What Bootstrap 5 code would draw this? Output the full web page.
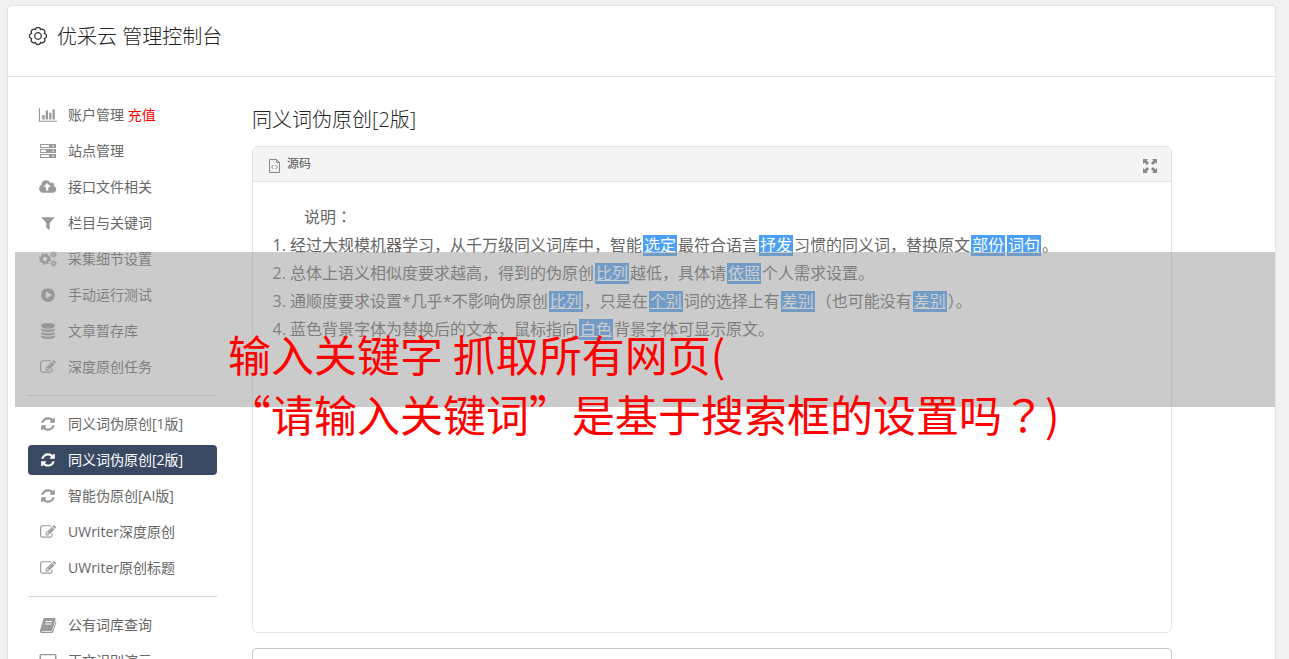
<!DOCTYPE html>
<html lang="zh-CN">
<head>
<meta charset="utf-8">
<meta name="viewport" content="width=device-width, initial-scale=1">
<title>优采云 管理控制台</title>
<link rel="stylesheet" href="https://cdn.jsdelivr.net/npm/bootstrap@5.3.0/dist/css/bootstrap.min.css">
<style>
  body { background: #f1f1f1; color: #333; height: 100vh; font-family: "Open Sans", "Noto Sans CJK SC", sans-serif; }
  .console { margin: 5px 13px 0 7px; background: #fff; border: 1px solid #e4e4e4; border-radius: 4px; min-height: 100vh; }
  .console-head { height: 71px; padding: 0 20px 8px; gap: 9px; border-bottom: 1px solid #e4e4e4; }
  h1, h2 { font-size: 20px; font-weight: 300; line-height: 30px; }
  h1, h2 { color: #222; }
  .console-body { padding: 23px 20px; gap: 35px; }
  .side { flex: 0 0 189px; }
  .side .nav { gap: 6px; }
  .side .nav-link { height: 30px; padding: 0 10px 2px; gap: 10px; font-size: 14px; color: #666; border-radius: 4px; white-space: nowrap; }
  .side .nav-link svg { width: 20px; height: 16px; margin-top: 2px; fill: #999; flex: none; }
  .side .nav-link.active { background: #394963; color: #fff; }
  .side .nav-link.active svg { fill: #fff; }
  .side hr { margin: 13px 0; border-color: #d4d4d4; opacity: 1; }
  .recharge { color: #f00; }
  .work { max-width: 920px; min-width: 0; }
  .work h2 { margin: 5px 0 11px; }
  .source { border-color: #e4e4e4; min-height: 487px; }
  .source .card-header { height: 35px; padding: 0 13px 0 14px; background: #f4f4f4; border-color: #e4e4e4; font-size: 12px; color: #555; }
  .source .card-body { padding: 20px 19px; font-size: 16px; line-height: 28px; color: #666; }
  .source p { text-indent: 32px; }
  .source ol { padding-left: 18px; }
  .swap { background: #4a9ff7; color: #fff; padding: 0 1px; margin: 0 1px; display: inline-block; line-height: 21px; height: 21px; }
  .swap:hover { background: #fff; color: #333; }
  .tool { width: 16px; height: 16px; }
  .midpoint { font-family: "Noto Sans CJK TC", sans-serif; }
  .result { margin-top: 15px; border-color: #c8c8c8; border-radius: 4px; }
  .caption-band { top: 252px; left: 15px; right: 14px; height: 155px; padding: 71px 0 0 213px; background: rgba(151,151,151,.5); color: #f00; font: 400 43px/60px "Noto Sans CJK SC", sans-serif; white-space: nowrap; pointer-events: none; }
</style>
<script src="https://cdn.jsdelivr.net/npm/bootstrap@5.3.0/dist/js/bootstrap.bundle.min.js"></script>
</head>
<body class="position-relative overflow-hidden">
<svg class="d-none">
  <symbol id="i-refresh" viewBox="0 0 1792 1792"><path d="M1639 1056q0 5-1 7-64 268-268 434.500t-478 166.500q-146 0-282.500-55t-243.500-157l-129 129q-19 19-45 19t-45-19-19-45v-448q0-26 19-45t45-19h448q26 0 45 19t19 45-19 45l-137 137q71 66 161 102t187 36q134 0 250-65t186-179q11-17 53-117 8-23 30-23h192q13 0 22.500 9.500t9.500 22.500zm25-800v448q0 26-19 45t-45 19h-448q-26 0-45-19t-19-45 19-45l138-138q-148-137-349-137-134 0-250 65t-186 179q-11 17-53 117-8 23-30 23h-199q-13 0-22.500-9.500t-9.500-22.500v-7q65-268 270-434.500t480-166.500q146 0 284 55.500t245 156.500l130-129q19-19 45-19t45 19 19 45z"/></symbol>
  <symbol id="i-edit" viewBox="0 0 1792 1792"><path d="M888 1184l116-116-152-152-116 116v56h96v96h56zm440-720q-16-16-33 1l-350 350q-17 17-1 33t33-1l350-350q17-17 1-33zm80 594v190q0 119-84.500 203.500t-203.500 84.500h-832q-119 0-203.500-84.500t-84.500-203.500v-832q0-119 84.500-203.500t203.500-84.500h832q63 0 117 25 15 7 18 23 3 17-9 29l-49 49q-14 14-32 8-23-6-45-6h-832q-66 0-113 47t-47 113v832q0 66 47 113t113 47h832q66 0 113-47t47-113v-126q0-13 9-22l64-64q15-15 35-7t20 29zm-96-738l288 288-672 672h-288v-288zm444 132l-92 92-288-288 92-92q28-28 68-28t68 28l152 152q28 28 28 68t-28 68z"/></symbol>
</svg>

<div class="console">
  <header class="console-head d-flex align-items-center">
    <svg width="20" height="20" viewBox="-10 -9 20 20" fill="none" stroke="#333" stroke-width="1.300" aria-hidden="true"><path d="M6.500 2.700A2.800 2.800 0 0 1 2.700 6.500A2.800 2.800 0 0 1-2.700 6.500A2.800 2.800 0 0 1-6.500 2.700A2.800 2.800 0 0 1-6.500-2.700A2.800 2.800 0 0 1-2.700-6.500A2.800 2.800 0 0 1 2.700-6.500A2.800 2.800 0 0 1 6.500-2.700A2.800 2.800 0 0 1 6.500 2.700Z"/><circle r="3.300"/></svg>
    <h1 class="m-0">优采云 管理控制台</h1>
  </header>

  <div class="console-body d-flex align-items-start">
    <aside class="side">
      <nav class="nav flex-column">
        <a class="nav-link d-flex align-items-center" href="#"><svg viewBox="0 0 2048 1792"><path d="M640 896v512h-256v-512h256zm384-512v1024h-256v-1024h256zm1024 1152v128h-2048v-1536h128v1408h1920zm-640-896v768h-256v-768h256zm384-384v1152h-256v-1152h256z"/></svg><span>账户管理 <span class="recharge">充值</span></span></a>
        <a class="nav-link d-flex align-items-center" href="#"><svg viewBox="0 0 20 16"><path fill-rule="evenodd" d="M2 1h16v4H2zM3 2v2h8V2zm11 .500v1h2v-1zM2 6h16v4H2zM3 7v2h5V7zm11 .500v1h2v-1zM2 11h16v4H2zM3 12v2h8v-2zm11 .500v1h2v-1z"/></svg>站点管理</a>
        <a class="nav-link d-flex align-items-center" href="#"><svg viewBox="-32 0 1920 1792"><path d="M1216 864q0-14-9-23l-352-352q-9-9-23-9t-23 9l-351 351q-10 12-10 24 0 14 9 23t23 9h224v352q0 13 9.500 22.500t22.500 9.500h192q13 0 22.500-9.500t9.500-22.500v-352h224q13 0 22.500-9.500t9.500-22.500zm640 288q0 159-112.500 271.500t-271.500 112.500h-1088q-185 0-316.500-131.500t-131.500-316.500q0-130 70-240t188-165q-2-30-2-43 0-212 150-362t362-150q156 0 285.500 87t188.500 231q71-62 166-62 106 0 181 75t75 181q0 76-41 138 130 31 213.500 135.500t83.500 238.500z"/></svg>接口文件相关</a>
        <a class="nav-link d-flex align-items-center" href="#"><svg viewBox="0 0 1792 1792"><path d="M1595 295q17 41-14 70l-493 493v742q0 42-39 59-13 5-25 5-27 0-45-19l-256-256q-19-19-19-45v-486l-493-493q-31-29-14-70 17-39 59-39h1280q42 0 59 39z"/></svg>栏目与关键词</a>
        <a class="nav-link d-flex align-items-center" href="#"><svg viewBox="0 0 20 16"><g fill="none" stroke="#999"><circle cx="7" cy="8" r="3.500" stroke-width="2.400"/><circle cx="7" cy="8" r="5.100" stroke-width="1.600" stroke-dasharray="2 2"/><circle cx="15.500" cy="3.500" r="1.700" stroke-width="1.300"/><circle cx="15.500" cy="3.500" r="2.700" stroke-width="1" stroke-dasharray="1.060 1.060"/><circle cx="15.500" cy="12.500" r="1.700" stroke-width="1.300"/><circle cx="15.500" cy="12.500" r="2.700" stroke-width="1" stroke-dasharray="1.060 1.060"/></g></svg>采集细节设置</a>
        <a class="nav-link d-flex align-items-center" href="#"><svg viewBox="0 0 1792 1792"><path d="M896 128q209 0 385.500 103t279.500 279.500 103 385.500-103 385.500-279.500 279.500-385.500 103-385.500-103-279.500-279.500-103-385.500 103-385.500 279.500-279.500 385.500-103zm384 823q32-18 32-55t-32-55l-544-320q-31-19-64-1-32 19-32 56v640q0 37 32 56 16 8 32 8 17 0 32-9z"/></svg>手动运行测试</a>
        <a class="nav-link d-flex align-items-center" href="#"><svg viewBox="0 0 1792 1792"><path d="M896 768q237 0 443-43t325-127v170q0 69-103 128t-280 93.500-385 34.500-385-34.500-280-93.500-103-128v-170q119 84 325 127t443 43zm0 768q237 0 443-43t325-127v170q0 69-103 128t-280 93.500-385 34.500-385-34.500-280-93.500-103-128v-170q119 84 325 127t443 43zm0-384q237 0 443-43t325-127v170q0 69-103 128t-280 93.500-385 34.500-385-34.500-280-93.500-103-128v-170q119 84 325 127t443 43zm0-1152q208 0 385 34.500t280 93.500 103 128v128q0 69-103 128t-280 93.500-385 34.500-385-34.500-280-93.500-103-128v-128q0-69 103-128t280-93.500 385-34.500z"/></svg>文章暂存库</a>
        <a class="nav-link d-flex align-items-center" href="#"><svg><use href="#i-edit"/></svg>深度原创任务</a>
      </nav>
      <hr>
      <nav class="nav flex-column">
        <a class="nav-link d-flex align-items-center" href="#"><svg><use href="#i-refresh"/></svg>同义词伪原创[1版]</a>
        <a class="nav-link active d-flex align-items-center" href="#" aria-current="page"><svg><use href="#i-refresh"/></svg>同义词伪原创[2版]</a>
        <a class="nav-link d-flex align-items-center" href="#"><svg><use href="#i-refresh"/></svg>智能伪原创[AI版]</a>
        <a class="nav-link d-flex align-items-center" href="#"><svg><use href="#i-edit"/></svg>UWriter深度原创</a>
        <a class="nav-link d-flex align-items-center" href="#"><svg><use href="#i-edit"/></svg>UWriter原创标题</a>
      </nav>
      <hr>
      <nav class="nav flex-column">
        <a class="nav-link d-flex align-items-center" href="#"><svg viewBox="0 0 20 16"><path fill-rule="evenodd" d="M7 1h9.500q1.500 0 1 1.500l-3 10q-.500 1.500-2 1.500H4.500q-1 0-.800.800h9q1.700 0 2.300-1.800l2.800-9q.800.500.500 1.500l-2.800 9q-.600 1.700-2.500 1.700H4q-2.500-.300-2-2.700l3-10.500Q5.500 1 7 1zm.800 3-.300 1h6.500l.300-1zm-.700 2.500-.300 1h6.500l.300-1z"/></svg>公有词库查询</a>
        <a class="nav-link d-flex align-items-center" href="#"><svg viewBox="0 0 20 16"><path fill-rule="evenodd" d="M3 1h14q1.500 0 1.500 1.500v9q0 1.500-1.500 1.500h-5v2H8v-2H3q-1.500 0-1.500-1.500v-9Q1.500 1 3 1zm0 1.200v9h14v-9z"/></svg>正文识别演示</a>
      </nav>
    </aside>

    <main class="work flex-grow-1">
      <h2>同义词伪原创[2版]</h2>
      <section class="card source">
        <div class="card-header d-flex align-items-center justify-content-between">
          <span class="d-flex align-items-center gap-1"><svg class="tool mt-1" viewBox="0 0 16 16" fill="none" stroke="#888" aria-hidden="true"><path d="M2.500 1.500h7l3 3v10h-10zM9.500 1.500v3h3M6.500 7 4.500 9l2 2M8.500 7l2 2-2 2"/></svg>源码</span>
          <button type="button" class="btn p-0 border-0 d-flex mt-1" aria-label="全屏"><svg class="tool" viewBox="0 0 16 16" fill="#888"><path d="M1 1h5L4.500 2.500 7 5 5 7 2.500 4.500 1 6zM15 1v5l-1.500-1.500L11 7 9 5l2.500-2.500L10 1zM1 15v-5l1.500 1.500L5 9l2 2-2.500 2.500L6 15zM15 15h-5l1.500-1.500L9 11l2-2 2.500 2.500L15 10z"/></svg></button>
        </div>
        <div class="card-body">
          <p class="m-0">说明<span class="midpoint" lang="zh-TW">：</span></p>
          <ol class="m-0">
            <li>经过大规模机器学习，从千万级同义词库中，智能<a class="swap" href="#">选定</a>最符合语言<a class="swap" href="#">抒发</a>习惯的同义词，替换原文<a class="swap" href="#">部份</a><a class="swap" href="#">词句</a>。</li>
            <li>总体上语义相似度要求越高，得到的伪原创<a class="swap" href="#">比列</a>越低，具体请<a class="swap" href="#">依照</a>个人需求设置。</li>
            <li>通顺度要求设置*几乎*不影响伪原创<a class="swap" href="#">比列</a>，只是在<a class="swap" href="#">个别</a>词的选择上有<a class="swap" href="#">差别</a>（也可能没有<a class="swap" href="#">差别</a>）。</li>
            <li>蓝色背景字体为替换后的文本，鼠标指向<a class="swap" href="#">白色</a>背景字体可显示原文。</li>
          </ol>
        </div>
      </section>
      <textarea class="form-control result" rows="8" aria-label="原文内容"></textarea>
    </main>
  </div>
</div>

<div class="caption-band position-absolute">输入关键字 抓取所有网页(<br>“请输入关键词”是基于搜索框的设置吗<span class="midpoint" lang="zh-TW">？</span>)</div>
</body>
</html>
